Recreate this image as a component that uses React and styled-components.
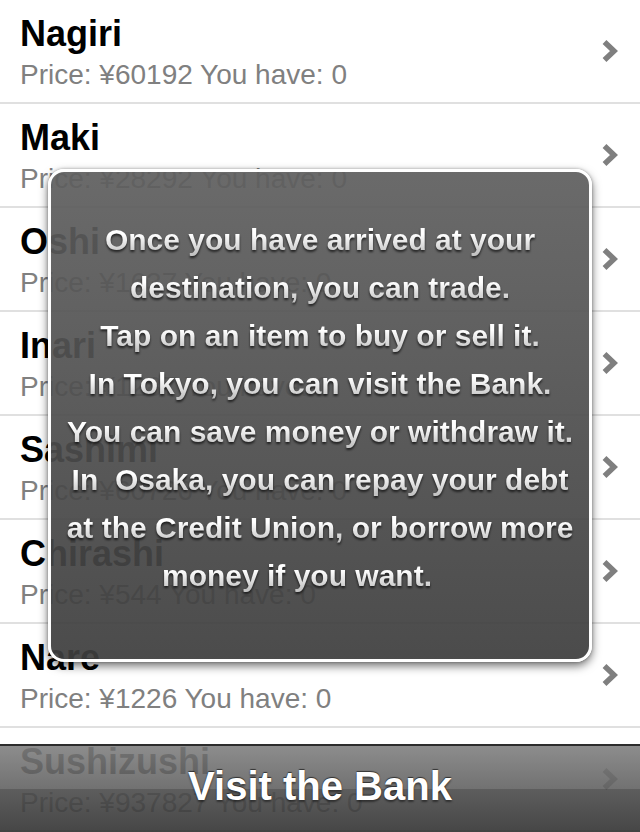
import React from 'react';
import styled, { createGlobalStyle } from 'styled-components';

const items = [
  { name: 'Nagiri', price: 60192 },
  { name: 'Maki', price: 28292 },
  { name: 'Oshi', price: 1637 },
  { name: 'Inari', price: 1287 },
  { name: 'Sashimi', price: 60726 },
  { name: 'Chirashi', price: 544 },
  { name: 'Nare', price: 1226 },
  { name: 'Sushizushi', price: 937827 },
];

const helpLines = [
  'Once you have arrived at your',
  'destination, you can trade.',
  'Tap on an item to buy or sell it.',
  'In Tokyo, you can visit the Bank.',
  'You can save money or withdraw it.',
  'In  Osaka, you can repay your debt',
  'at the Credit Union, or borrow more',
  'money if you want.',
];

const GlobalStyle = createGlobalStyle`
  html, body {
    margin: 0;
    padding: 0;
    background: #fff;
  }
  body {
    font-family: "Liberation Sans", Arial, Helvetica, sans-serif;
  }
`;

const Chevron = () => (
  <ChevronIcon width="16" height="24" viewBox="0 0 16 24">
    <polyline points="2.5,3 12,12 2.5,21" fill="none" stroke="#7f7f7f" strokeWidth="5.5" strokeLinejoin="miter" />
  </ChevronIcon>
);

export default function App() {
  return (
    <Screen>
      <GlobalStyle />
      <List>
        {items.map((item) => (
          <Row key={item.name}>
            <RowText>
              <Title>{item.name}</Title>
              <Detail>Price: ¥{item.price} You have: 0</Detail>
            </RowText>
            <Chevron />
          </Row>
        ))}
      </List>

      <HelpPopup>
        <HelpText>
          {helpLines.map((line, i) => (
            <HelpLine key={i} $trail={i === helpLines.length - 1 ? 46 : 0}>{line}</HelpLine>
          ))}
        </HelpText>
      </HelpPopup>

      <BankBar>
        <BankLabel>Visit the Bank</BankLabel>
      </BankBar>
    </Screen>
  );
}

const Screen = styled.div`
  position: relative;
  width: 640px;
  height: 832px;
  overflow: hidden;
  background: #fff;
`;

const List = styled.div`
  display: flex;
  flex-direction: column;
`;

const Row = styled.div`
  display: flex;
  align-items: flex-start;
  justify-content: space-between;
  box-sizing: border-box;
  height: 104px;
  padding: 14px 22px 0 20px;
  border-bottom: 2px solid #e0e0e0;
`;

const RowText = styled.div`
  display: flex;
  flex-direction: column;
`;

const Title = styled.div`
  font-size: 36px;
  line-height: 40px;
  font-weight: 700;
  color: #000;
`;

const Detail = styled.div`
  font-size: 28px;
  line-height: 42px;
  color: #808080;
`;

const ChevronIcon = styled.svg`
  margin-top: 25px;
  flex-shrink: 0;
`;

const HelpPopup = styled.div`
  position: absolute;
  left: 48px;
  top: 169px;
  width: 544px;
  height: 493px;
  box-sizing: border-box;
  border: 3px solid #fff;
  border-radius: 16px;
  background: linear-gradient(rgba(95, 95, 95, 0.93), rgba(62, 62, 62, 0.93));
  box-shadow: 0 4px 10px rgba(0, 0, 0, 0.55), 0 0 3px rgba(0, 0, 0, 0.3);
  padding-top: 44px;
`;

const HelpText = styled.div`
  display: flex;
  flex-direction: column;
  align-items: center;
  filter: drop-shadow(0 2px 1px rgba(0, 0, 0, 0.65));
`;

const HelpLine = styled.div`
  font-size: 30px;
  line-height: 48px;
  font-weight: 700;
  white-space: pre;
  padding-right: ${(p) => p.$trail}px;
  background: linear-gradient(#ffffff 38%, #c4c4c4 78%);
  -webkit-background-clip: text;
  background-clip: text;
  color: transparent;
`;

const BankBar = styled.div`
  position: absolute;
  left: 0;
  right: 0;
  bottom: 0;
  height: 88px;
  box-sizing: border-box;
  border-top: 2px solid rgba(40, 40, 40, 0.85);
  background: linear-gradient(
    rgba(128, 128, 128, 0.9) 0%,
    rgba(98, 98, 98, 0.9) 50%,
    rgba(76, 76, 76, 0.9) 50%,
    rgba(50, 50, 50, 0.9) 100%
  );
  display: flex;
  align-items: center;
  justify-content: center;
`;

const BankLabel = styled.div`
  font-size: 40px;
  font-weight: 700;
  color: #fff;
  margin-top: -5px;
  text-shadow: 0 -1px 1px rgba(0, 0, 0, 0.6), 0 2px 2px rgba(0, 0, 0, 0.45);
`;
